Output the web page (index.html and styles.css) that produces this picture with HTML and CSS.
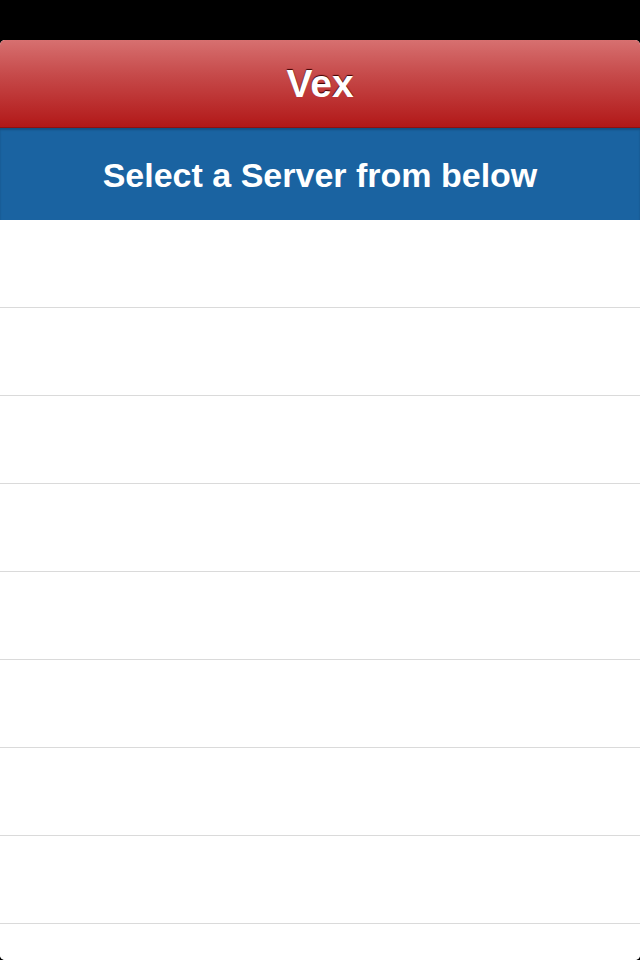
FILE: index.html
```html
<!DOCTYPE html>
<html>
<head>
<meta charset="utf-8">
<link rel="stylesheet" href="styles.css">
</head>
<body>
<div class="status"></div>
<div class="app">
  <header class="header"><h1 class="title">Vex</h1></header>
  <div class="subbar"><h2 class="subtitle">Select a Server from below</h2></div>
  <ul class="list">
    <li class="row"></li>
    <li class="row"></li>
    <li class="row"></li>
    <li class="row"></li>
    <li class="row"></li>
    <li class="row"></li>
    <li class="row"></li>
    <li class="row"></li>
    <li class="row"></li>
  </ul>
</div>
</body>
</html>
```
FILE: styles.css
```css
html, body {
  margin: 0;
  padding: 0;
  background: #000;
  height: 960px;
  overflow: hidden;
  font-family: "Liberation Sans", Arial, sans-serif;
}
.status {
  height: 40px;
  background: #000;
}
.app {
  height: 920px;
  background: #fff;
  border-radius: 5px;
  overflow: hidden;
  display: flex;
  flex-direction: column;
}
.header {
  flex-shrink: 0;
  height: 87px;
  border-bottom: 1px solid #8e1111;
  background: linear-gradient(to bottom, #d77070 0%, #c64a4a 40%, #b21818 100%);
  display: flex;
  align-items: center;
  justify-content: center;
}
.title {
  margin: 0;
  color: #fff;
  font-size: 39px;
  font-weight: bold;
  text-shadow: 0 -1px 1px #3a0000;
  line-height: 1;
}
.subbar {
  flex-shrink: 0;
  height: 92px;
  background: #1a63a1;
  box-shadow: inset 0 2px 2px rgba(0,0,0,0.2);
  display: flex;
  align-items: center;
  justify-content: center;
}
.subtitle {
  margin: 0;
  color: #fff;
  font-size: 34px;
  font-weight: bold;
  line-height: 1;
  padding-top: 2px;
}
.list {
  flex-shrink: 0;
  list-style: none;
  margin: 0;
  padding: 0;
}
.row {
  height: 87px;
  border-bottom: 1px solid #dadada;
  background: #fff;
}
```
